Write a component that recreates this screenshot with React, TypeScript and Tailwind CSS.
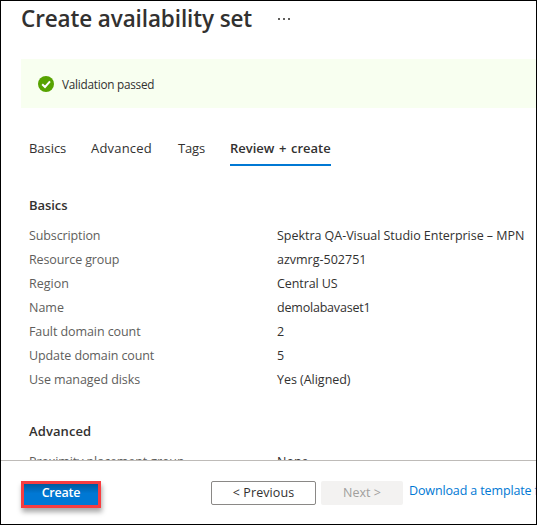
const details = [
  { label: "Subscription", value: "Spektra QA-Visual Studio Enterprise – MPN", labelClass: "tracking-[-0.12px]", valueClass: "tracking-[-0.03px]" },
  { label: "Resource group", value: "azvmrg-502751", labelClass: "tracking-[-0.12px]", valueClass: "" },
  { label: "Region", value: "Central US", labelClass: "", valueClass: "tracking-[-0.08px]" },
  { label: "Name", value: "demolabavaset1", labelClass: "", valueClass: "tracking-[-0.2px]" },
  { label: "Fault domain count", value: "2", labelClass: "tracking-[-0.08px]", valueClass: "" },
  { label: "Update domain count", value: "5", labelClass: "tracking-[-0.1px]", valueClass: "" },
  { label: "Use managed disks", value: "Yes (Aligned)", labelClass: "tracking-[-0.08px]", valueClass: "tracking-[-0.03px]" },
];

function Row({ label, value, labelClass, valueClass }: (typeof details)[number]) {
  return (
    <div className="flex h-6 items-center">
      <dt className="w-[248px] shrink-0 text-[#605e5c]"><span className={labelClass}>{label}</span></dt>
      <dd className="text-[#323130]"><span className={valueClass}>{value}</span></dd>
    </div>
  );
}

export default function App() {
  return (
    <div className="flex h-[525px] w-[537px] flex-col overflow-hidden border border-black bg-white font-['Open_Sans','Noto_Sans',sans-serif] text-[12.5px] leading-6 whitespace-nowrap text-[#323130]">
      <main className="h-[459px] shrink-0 overflow-hidden">
        <header className="flex h-[58px] items-start pl-5">
          <h1 className="w-[257px] shrink-0 text-[22.5px] leading-9 font-semibold tracking-[-0.12px]">Create availability set</h1>
          <button className="flex h-9 items-center gap-[3px]" aria-label="More">
            <span className="h-0.5 w-0.5 bg-[#605e5c]" />
            <span className="h-0.5 w-0.5 bg-[#605e5c]" />
            <span className="h-0.5 w-0.5 bg-[#605e5c]" />
          </button>
        </header>
        <div className="ml-5 flex h-[49px] items-center gap-2 bg-[#f8fff0] pl-[17px]">
          <svg className="size-4" viewBox="0 0 16 16" aria-hidden="true">
            <circle cx="8" cy="8" r="8" fill="#57a300" />
            <path d="M4.2 8.3 7 11 12 5.4" fill="none" stroke="#fff" strokeWidth="2" />
          </svg>
          <span className="text-[11.75px] tracking-[-0.24px]">Validation passed</span>
        </div>
        <nav className="mt-[27px] ml-7 flex h-[31px] text-[13px]">
          <a className="w-[62px] pt-px tracking-[-0.05px]">Basics</a>
          <a className="w-[87px] pt-px tracking-[0.2px]">Advanced</a>
          <a className="w-[52px] pt-px tracking-[-0.15px]">Tags</a>
          <a className="w-[101px] border-b-2 border-[#0078d4] pt-px font-semibold tracking-[-0.02px] [word-spacing:1.3px]">Review + create</a>
        </nav>
        <section className="mt-[27px] pl-7">
          <h2 className="mb-[7px] text-[13px] font-semibold tracking-[-0.05px]">Basics</h2>
          <dl>{details.map((d) => <Row key={d.label} {...d} />)}</dl>
        </section>
        <section className="mt-[27px] pl-7">
          <h2 className="mb-[7px] text-[13px] font-semibold tracking-[0.1px]">Advanced</h2>
          <dl><Row label="Proximity placement group" value="None" labelClass="tracking-[-0.1px]" valueClass="" /></dl>
        </section>
      </main>
      <footer className="flex h-16 shrink-0 items-start border-t border-[#bebbb8] pt-5 pl-5">
        <button className="h-[27px] w-20 shrink-0 border-3 border-[#f83d40] bg-[#0078d4] bg-linear-to-b from-[#005a9e] to-[#0078d4] to-45% pb-[3px] leading-[18px] font-semibold tracking-[-0.2px] text-white shadow-[1px_4px_5px_rgba(0,0,0,0.35)]">Create</button>
        <button className="ml-[110px] h-6 w-[105px] shrink-0 rounded-xs border border-[#8a8886] leading-[22px] tracking-[0.08px]">&lt; Previous</button>
        <button className="ml-[5px] h-6 w-[82px] shrink-0 rounded-xs bg-[#f3f2f1] leading-6 text-[#a19f9d]">Next &gt;</button>
        <a className="-mt-[2px] ml-[6px] shrink-0 tracking-[-0.13px] text-[#0078d4]">Download a template for automation</a>
      </footer>
    </div>
  );
}
